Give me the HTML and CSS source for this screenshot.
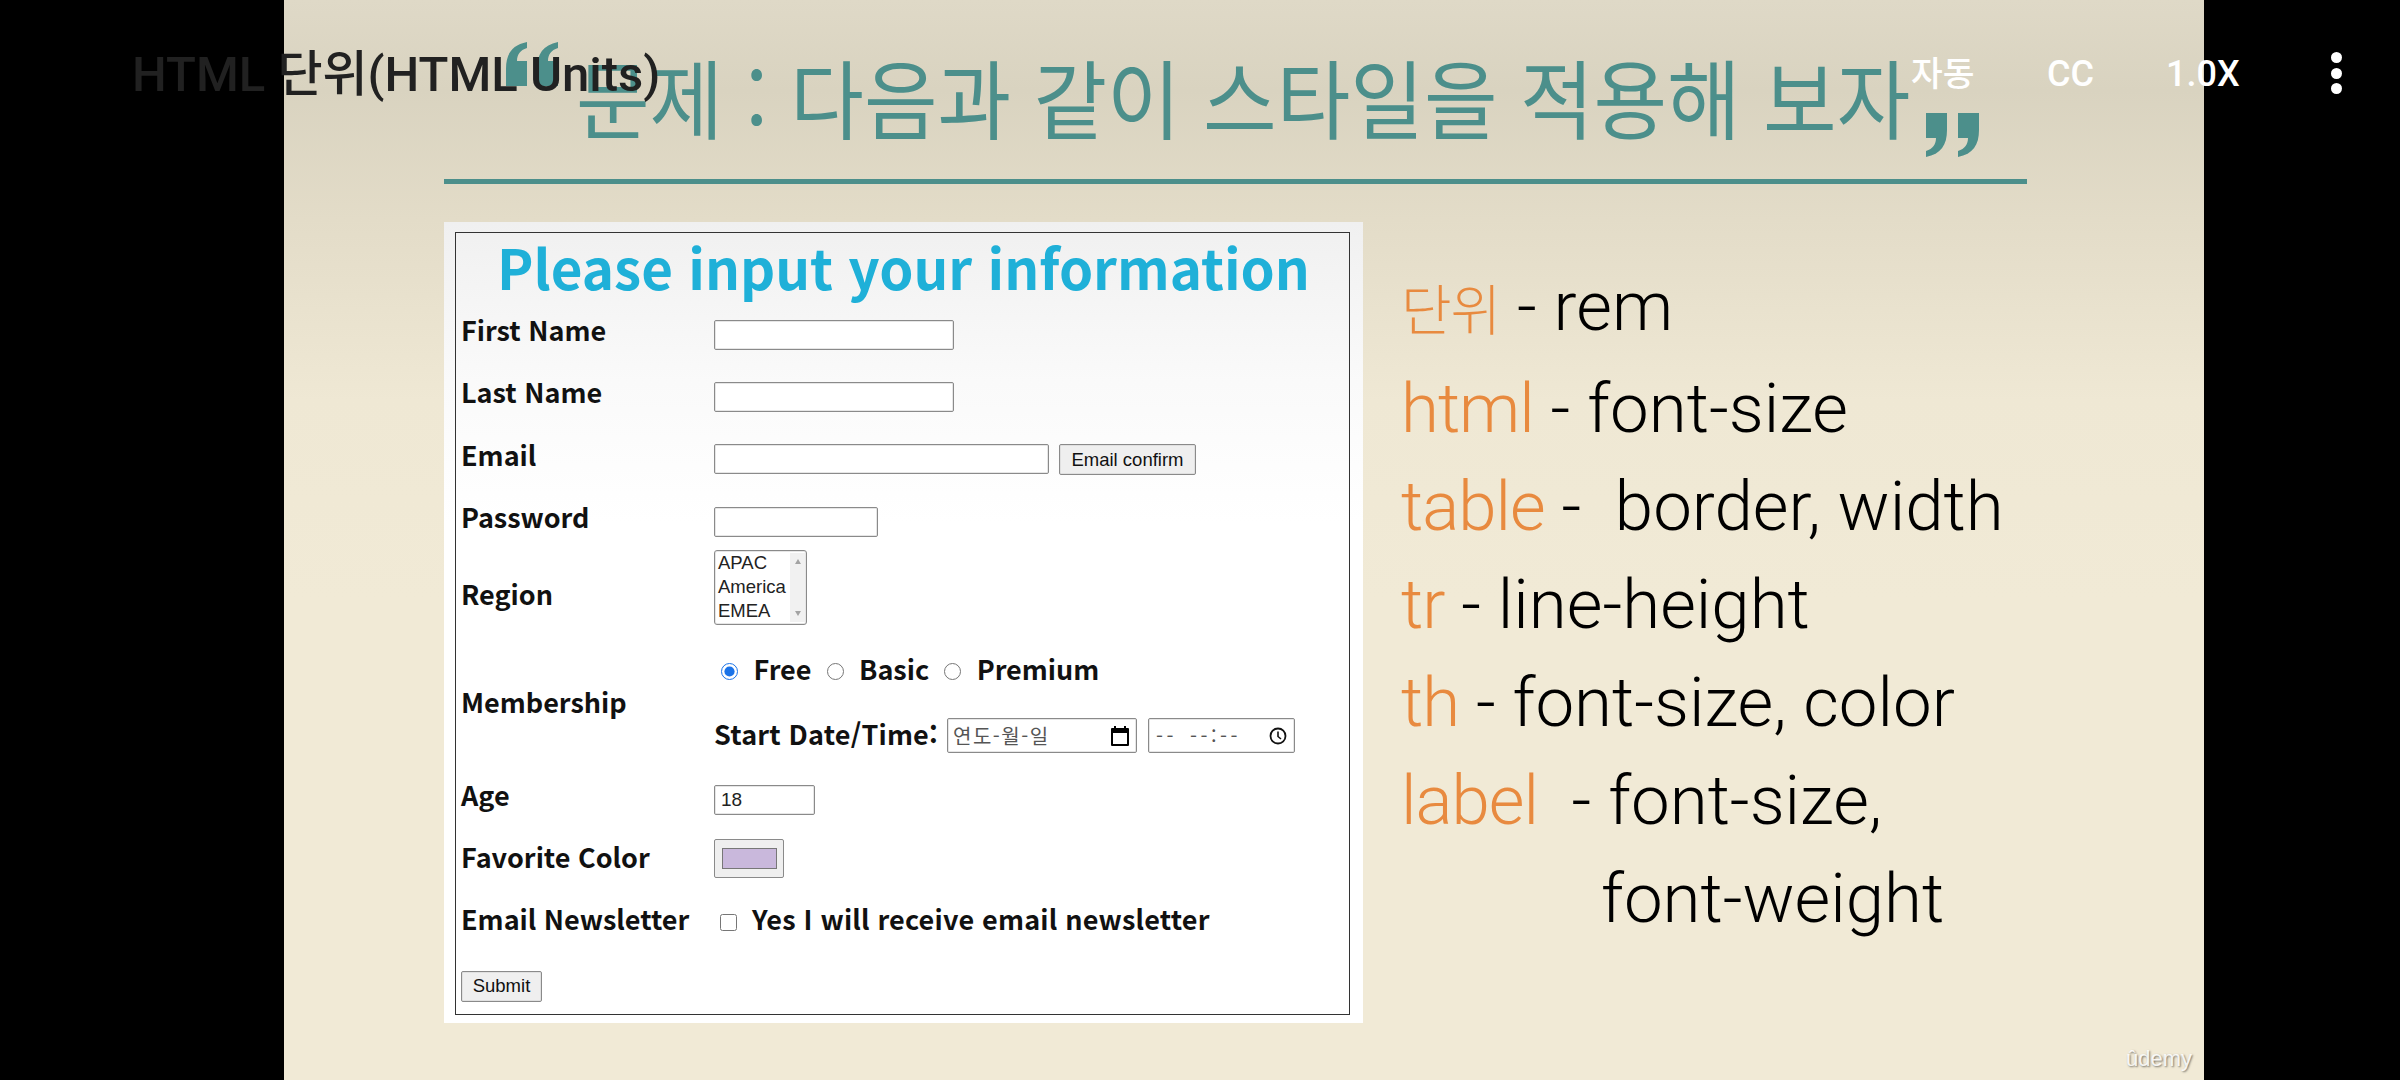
FILE: index.html
```html
<!DOCTYPE html>
<html lang="ko">
<head>
    <meta charset="UTF-8">
    <title>HTML 단위(HTML Units)</title>
    <link rel="stylesheet" href="styles.css">
</head>
<body>
    <div class="screen">
        <div class="slide">
            <div class="slide-head">
                <svg class="quote quote-open" viewBox="0 0 56 44"><path d="M24 44H3V27C3 12 9 3 24 0V6C17 8 14 13 14 19H24ZM55 44H34V27C34 12 40 3 55 0V6C48 8 45 13 45 19H55Z"/></svg>
                <h1 class="slide-title">문제 : 다음과 같이 스타일을 적용해 보자</h1>
                <svg class="quote quote-close" viewBox="0 0 56 44"><path d="M1 0H22V17C22 32 16 41 1 44V38C8 36 11 31 11 25H1ZM33 0H54V17C54 32 48 41 33 44V38C40 36 43 31 43 25H33Z"/></svg>
            </div>
            <div class="slide-body">
                <div class="panel">
                    <form>
                        <table class="info-table">
                            <tr class="row-title"><td colspan="2"><h2>Please input your information</h2></td></tr>
                            <tr class="row">
                                <th>First Name</th>
                                <td><input type="text" class="field field-name"></td>
                            </tr>
                            <tr class="row">
                                <th>Last Name</th>
                                <td><input type="text" class="field field-name"></td>
                            </tr>
                            <tr class="row">
                                <th>Email</th>
                                <td class="inline"><input type="text" class="field field-email"><button type="button" class="btn btn-confirm">Email confirm</button></td>
                            </tr>
                            <tr class="row">
                                <th>Password</th>
                                <td><input type="password" class="field field-pw"></td>
                            </tr>
                            <tr class="row-region">
                                <th>Region</th>
                                <td>
                                    <div class="listbox">
                                        <ul>
                                            <li>APAC</li>
                                            <li>America</li>
                                            <li>EMEA</li>
                                        </ul>
                                        <div class="scroll"><span class="arrow-up"></span><span class="arrow-down"></span></div>
                                    </div>
                                </td>
                            </tr>
                            <tr class="row-member">
                                <th>Membership</th>
                                <td>
                                    <div class="radios">
                                        <input type="radio" name="plan" checked><label>Free</label>
                                        <input type="radio" name="plan"><label>Basic</label>
                                        <input type="radio" name="plan"><label>Premium</label>
                                    </div>
                                    <div class="start-date">
                                        <label>Start Date/Time:</label>
                                        <div class="date-box box-date">
                                            <span class="date-text">연도-월-일</span>
                                            <svg width="20" height="20" viewBox="0 0 20 20"><path d="M4 0h2v2h8V0h2v2h2a1 1 0 0 1 1 1v16a1 1 0 0 1-1 1H2a1 1 0 0 1-1-1V3a1 1 0 0 1 1-1h2zM3 7v11h14V7z"/></svg>
                                        </div>
                                        <div class="date-box box-time">
                                            <span class="time-text">-- --:--</span>
                                            <svg width="18" height="18" viewBox="0 0 18 18"><circle cx="9" cy="9" r="7.5" fill="none" stroke="#111" stroke-width="1.8"/><path d="M9 4.5V9.5L12 12" fill="none" stroke="#111" stroke-width="1.6"/></svg>
                                        </div>
                                    </div>
                                </td>
                            </tr>
                            <tr class="row">
                                <th>Age</th>
                                <td><input type="text" class="field field-age" value="18"></td>
                            </tr>
                            <tr class="row-color">
                                <th>Favorite Color</th>
                                <td><div class="swatch"><span></span></div></td>
                            </tr>
                            <tr class="row-news">
                                <th>Email Newsletter</th>
                                <td class="newsletter"><input type="checkbox"><label>Yes I will receive email newsletter</label></td>
                            </tr>
                            <tr class="row-submit">
                                <td colspan="2"><button type="button" class="btn btn-submit">Submit</button></td>
                            </tr>
                        </table>
                    </form>
                </div>
                <div class="notes">
                    <p><em class="hangul">단위</em> - rem</p>
                    <p><em>html</em> - font-size</p>
                    <p><em>table</em> -&nbsp; border, width</p>
                    <p><em>tr</em> - line-height</p>
                    <p><em>th</em> - font-size, color</p>
                    <p><em>label</em>&nbsp; - font-size,</p>
                    <p class="note-cont">font-weight</p>
                </div>
            </div>
        </div>

        <div class="player-bar">
            <div class="player-title">HTML 단위(HTML Units)</div>
            <div class="player-auto">자동</div>
            <div class="player-cc">CC</div>
            <div class="player-speed">1.0X</div>
            <div class="player-more"><i></i><i></i><i></i></div>
        </div>
        <div class="watermark">ûdemy</div>
    </div>
</body>
</html>
```
FILE: styles.css
```css
html, body {
    margin: 0;
    padding: 0;
    background-color: #000;
}
.screen {
    position: relative;
    width: 2400px;
    height: 1080px;
    overflow: hidden;
    background-color: #000;
}

/* slide */
.slide {
    width: 1920px;
    height: 1080px;
    margin-left: 284px;
    padding-left: 160px;
    box-sizing: border-box;
    background: linear-gradient(#dfd9c7 0, #d9d3c0 90px, #e3dcc8 220px, #efe8d4 400px, #f1ead6 600px);
}
.slide-head {
    position: relative;
    width: 1583px;
    height: 179px;
    box-sizing: content-box;
    border-bottom: 5px solid #4c8f8b;
}
.slide-title {
    margin: 0;
    padding: 47px 0 0 132px;
    font-family: "Noto Sans CJK KR", sans-serif;
    font-size: 80px;
    font-weight: 400;
    line-height: 92px;
    color: #4c8f8b;
    white-space: nowrap;
    transform: scaleY(1.08);
}
.quote {
    position: absolute;
    width: 56px;
    height: 44px;
    fill: #4c8f8b;
}
.quote-open {
    left: 59px;
    top: 42px;
}
.quote-close {
    left: 1481px;
    top: 113px;
}
.slide-body {
    display: flex;
    margin-top: 38px;
}

/* form panel */
.panel {
    width: 919px;
    height: 801px;
    padding: 10px 13px 9px 11px;
    box-sizing: border-box;
    background: linear-gradient(#f0f0f0 0, #fafafa 160px, #fff 300px);
}
.info-table {
    width: 100%;
    height: 781px;
    border: 1px solid #333;
    border-collapse: collapse;
    font-family: "Noto Sans CJK KR", sans-serif;
    color: #111;
}
.info-table th {
    width: 247px;
    padding: 0 0 0 5px;
    font-size: 27px;
    font-weight: 700;
    line-height: 36px;
    text-align: left;
    white-space: nowrap;
}
.info-table td {
    padding: 0 0 0 6px;
}
.row-title {
    height: 71px;
}
.row-title td {
    text-align: center;
}
.row-title h2 {
    margin: 0 4px 2px 0;
    font-size: 54.7px;
    font-weight: 700;
    line-height: 68px;
    color: #1fb0d8;
}
.row {
    height: 62.5px;
}
.row th {
    padding-bottom: 10px;
}
.row-region {
    height: 67px;
}
.info-table .row-region th {
    padding-top: 13px;
}
.row-member {
    height: 148px;
}
.info-table .row-member th {
    padding-top: 14px;
}
.info-table .row-member td {
    padding-top: 17px;
}
.row-color {
    height: 55px;
}
.info-table .row-color th {
    padding-bottom: 3px;
}
.row-news {
    height: 72px;
}
.info-table .row-news th {
    padding-bottom: 6px;
}
.info-table .row-news td {
    padding-bottom: 8px;
}
.row-submit {
    height: 56px;
}
.info-table .row-submit td {
    padding-left: 5px;
    padding-top: 1px;
}

/* controls */
.field {
    display: block;
    height: 30px;
    margin: 0;
    padding: 0 6px;
    box-sizing: border-box;
    border: 1px solid #8a8a8a;
    border-radius: 2px;
    box-shadow: inset 0 0 0 1px #e6e6e6;
    background-color: #fff;
    font-family: "Liberation Sans", sans-serif;
    font-size: 19px;
    color: #222;
}
.field-name {
    width: 240px;
}
.field-email {
    width: 335px;
}
.field-pw {
    width: 164px;
}
.field-age {
    width: 101px;
}
.inline {
    white-space: nowrap;
}
.inline .field {
    display: inline-block;
    vertical-align: top;
}
.btn {
    height: 31px;
    margin: 0;
    padding: 0;
    box-sizing: border-box;
    border: 1px solid #8a8a8a;
    border-radius: 2px;
    box-shadow: inset 0 0 0 1px #e0e0e0;
    background-color: #efefef;
    font-family: "Liberation Sans", sans-serif;
    font-size: 18.5px;
    color: #111;
}
.btn-confirm {
    width: 137px;
    margin-left: 10px;
    vertical-align: top;
}
.btn-submit {
    display: block;
    width: 81px;
}
.listbox {
    display: flex;
    width: 93px;
    height: 75px;
    margin: -4px 0;
    box-sizing: border-box;
    border: 1px solid #8a8a8a;
    border-radius: 3px;
    box-shadow: inset 0 0 0 1px #e6e6e6;
    background-color: #fff;
}
.listbox ul {
    flex: 1;
    margin: 0;
    padding: 0 0 0 3px;
    list-style: none;
    font-family: "Liberation Sans", sans-serif;
    font-size: 18.5px;
    line-height: 24px;
    color: #222;
}
.scroll {
    display: flex;
    flex-direction: column;
    justify-content: space-between;
    align-items: center;
    width: 15px;
    margin: 2px 1px 2px 0;
    padding: 6px 0;
    box-sizing: border-box;
    background-color: #f1f1f1;
}
.arrow-up, .arrow-down {
    width: 0;
    height: 0;
    border-left: 3.5px solid transparent;
    border-right: 3.5px solid transparent;
}
.arrow-up {
    border-bottom: 5px solid #a3a3a3;
}
.arrow-down {
    border-top: 5px solid #a3a3a3;
}
.radios {
    display: flex;
    align-items: center;
    height: 36px;
    margin-bottom: 29px;
    padding-left: 7px;
    font-size: 27px;
    font-weight: 700;
}
.radios input {
    flex: none;
    width: 17px;
    height: 17px;
    margin: 0 15.5px 0 0;
    accent-color: #1a73e8;
}
.radios label {
    margin-right: 15px;
    padding-bottom: 5px;
}
.start-date {
    display: flex;
    align-items: center;
    height: 35px;
    font-size: 27px;
    font-weight: 700;
}
.start-date label {
    padding-bottom: 5px;
    letter-spacing: 0.2px;
}
.date-box {
    display: flex;
    align-items: center;
    justify-content: space-between;
    height: 35px;
    box-sizing: border-box;
    border: 1px solid #8a8a8a;
    border-radius: 2px;
    box-shadow: inset 0 0 0 1px #e6e6e6;
    background-color: #fff;
    font-size: 20px;
    font-weight: 400;
    color: #555;
}
.box-date {
    width: 190px;
    margin-left: 9px;
    padding: 0 6px 0 5px;
}
.box-time {
    width: 147px;
    margin-left: 11px;
    padding: 0 7px;
}
.date-text {
    letter-spacing: 1.5px;
}
.time-text {
    letter-spacing: 3.5px;
    word-spacing: 4px;
}
.swatch {
    width: 70px;
    height: 39px;
    padding: 8px 6px 8px 7px;
    box-sizing: border-box;
    border: 1px solid #8a8a8a;
    border-radius: 2px;
    background-color: #efefef;
}
.swatch span {
    display: block;
    height: 100%;
    border: 1px solid #777;
    box-sizing: border-box;
    background-color: #c9b8dc;
}
.newsletter {
    font-size: 27px;
    font-weight: 700;
    white-space: nowrap;
}
.newsletter input {
    width: 17px;
    height: 17px;
    margin: 0 15px 0 6px;
    vertical-align: -1px;
}
.newsletter label {
    letter-spacing: 0.2px;
}

/* notes on the right */
.notes {
    margin-left: 38px;
    padding-top: 36px;
    font-family: Roboto, "Noto Sans CJK KR", sans-serif;
    font-size: 69px;
    font-weight: 300;
    line-height: 98px;
    color: #000;
    white-space: nowrap;
}
.notes p {
    margin: 0;
}
.notes em {
    font-style: normal;
    letter-spacing: -1px;
    color: #e88a3f;
}
.notes .hangul {
    font-size: 55px;
}
.note-cont {
    padding-left: 200px;
}

/* video player overlay */
.player-bar {
    position: absolute;
    left: 0;
    top: 0;
    width: 2400px;
    height: 146px;
    font-family: Roboto, "Noto Sans CJK KR", sans-serif;
    color: #fff;
    font-size: 36px;
    font-weight: 500;
}
.player-title {
    position: absolute;
    left: 132px;
    top: 45px;
    font-size: 49px;
    line-height: 60px;
    color: #212121;
    white-space: nowrap;
}
.player-auto, .player-cc, .player-speed {
    position: absolute;
    top: 52px;
    line-height: 44px;
    white-space: nowrap;
}
.player-auto {
    left: 1911px;
    font-size: 34.5px;
}
.player-cc {
    left: 2047px;
}
.player-speed {
    left: 2166px;
}
.player-more {
    position: absolute;
    left: 2331px;
    top: 52px;
    display: flex;
    flex-direction: column;
    gap: 4.5px;
}
.player-more i {
    display: block;
    width: 11px;
    height: 11px;
    border-radius: 50%;
    background-color: #fff;
}
.watermark {
    position: absolute;
    left: 2126px;
    top: 1044px;
    font-family: "Liberation Sans", sans-serif;
    font-size: 22px;
    line-height: 30px;
    color: rgba(255,255,255,0.9);
    text-shadow: 1px 1px 2px rgba(0,0,0,0.5);
}
```
